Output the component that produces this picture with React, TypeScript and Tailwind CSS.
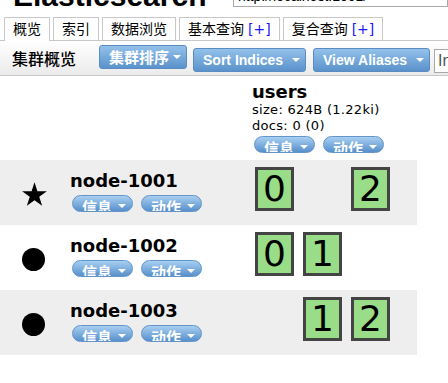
import React from 'react';

const nodes = [
  { name: 'node-1001', master: true, shards: [0, null, 2] },
  { name: 'node-1002', master: false, shards: [0, 1, null] },
  { name: 'node-1003', master: false, shards: [null, 1, 2] },
];

function Arrow({ className = '' }: { className?: string }) {
  return (
    <div
      className={`w-0 h-0 border-x-[4px] border-x-transparent border-t-[4px] border-t-white ${className}`}
    />
  );
}

function ToolButton({ label, className = '', cjk = false }: { label: string; className?: string; cjk?: boolean }) {
  return (
    <div
      className={`shrink-0 h-[24px] flex items-center justify-between pl-[9px] pr-[5px] rounded-[3px] border border-[#5a8bc2] bg-gradient-to-b from-[#93c1ea] to-[#5a92cb] text-white font-bold whitespace-nowrap ${className}`}
    >
      <span
        className={
          cjk
            ? "text-[15px] leading-[18px] font-['Noto_Sans_CJK_SC',sans-serif]"
            : "text-[14px] leading-[18px] font-['Liberation_Sans',sans-serif]"
        }
      >
        {label}
      </span>
      <Arrow />
    </div>
  );
}

function Pill({ label }: { label: string }) {
  return (
    <div className="h-[17px] w-[61px] rounded-full border border-[#6494c8] bg-gradient-to-b from-[#a8cff1] to-[#5790cb] overflow-hidden flex items-start pl-[9px] pr-[6px]">
      <span className="pt-[3px] text-[15px] leading-[15px] font-bold text-white font-['Noto_Sans_CJK_SC',sans-serif]">
        {label}
      </span>
      <Arrow className="ml-auto mt-[8px]" />
    </div>
  );
}

function Pills({ className = '' }: { className?: string }) {
  return (
    <div className={`flex gap-[8px] ${className}`}>
      <Pill label="信息" />
      <Pill label="动作" />
    </div>
  );
}

function Shard({ n }: { n: number }) {
  return (
    <div className="ml-[3px] w-[39px] h-[44px] border-[3px] border-[#444] bg-[#99dd88] flex items-center justify-center text-[36px] leading-none text-black">
      {n}
    </div>
  );
}

function Star() {
  return (
    <svg width="25" height="24" viewBox="0 0 25 24">
      <polygon
        fill="#000"
        points="12.5,0.2 15.42,9.18 24.86,9.18 17.23,14.74 20.14,23.72 12.5,18.17 4.86,23.72 7.77,14.74 0.14,9.18 9.58,9.18"
      />
    </svg>
  );
}

const tabs = [
  { label: '概览', active: true },
  { label: '索引' },
  { label: '数据浏览' },
  { label: '基本查询', plus: true },
  { label: '复合查询', plus: true },
];

export default function App() {
  return (
    <div className="w-[448px] h-[383px] overflow-hidden bg-white text-black font-['DejaVu_Sans','Noto_Sans_CJK_SC',sans-serif]">
      {/* page header, scrolled mostly out of view */}
      <div className="h-[17px] flex items-start overflow-hidden">
        <div className="ml-[13px] w-[220px] shrink-0 h-[8px] overflow-hidden">
          <div className="mt-[-19px] text-[30px] leading-[30px] font-bold whitespace-nowrap font-['Liberation_Sans',sans-serif]">
            Elasticsearch
          </div>
        </div>
        <div className="flex-1 h-[7px] border-x border-b border-[#a9a9a9] overflow-hidden">
          <div className="mt-[-11px] pl-[4px] text-[14px] leading-[15px] whitespace-nowrap font-['Liberation_Sans',sans-serif]">
            http://localhost:1001/
          </div>
        </div>
      </div>

      {/* tabs */}
      <div className="h-[23px] flex items-end gap-[3px] pl-[4px]">
        {tabs.map((t) => (
          <div
            key={t.label}
            className={`shrink-0 flex items-center px-[8px] border border-b-0 border-[#c8c8c8] text-[14px] leading-[20px] whitespace-nowrap ${
              t.active ? 'h-[24px] mb-[-1px] relative z-10 bg-white pb-[1px]' : 'h-[23px] bg-white'
            }`}
          >
            {t.label}
            {t.plus && <span className="ml-[4px] text-[#1a1aff]">[+]</span>}
          </div>
        ))}
      </div>

      {/* toolbar */}
      <div className="h-[36px] border-y border-[#c8c8c8] bg-gradient-to-b from-white to-[#ebebeb] flex items-start pl-[12px] overflow-hidden">
        <div className="shrink-0 self-center w-[87px] text-[16px] leading-[20px] font-medium whitespace-nowrap font-['Noto_Sans_CJK_SC',sans-serif]">
          集群概览
        </div>
        <ToolButton label="集群排序" cjk className="w-[88px] mt-[4px]" />
        <ToolButton label="Sort Indices" className="w-[113px] mt-[7px] ml-[6px]" />
        <ToolButton label="View Aliases" className="w-[117px] mt-[7px] ml-[7px]" />
        <div className="ml-[4px] mt-[8px] h-[24px] w-[200px] shrink-0 border border-[#a9a9a9] bg-white pl-[3px] text-[16px] leading-[22px] text-[#555] whitespace-nowrap font-['Liberation_Sans',sans-serif]">
          Index Filter
        </div>
      </div>

      {/* cluster overview table */}
      <div className="w-[417px]">
        <div className="h-[84px] flex">
          <div className="w-[252px] shrink-0" />
          <div className="pt-[6px]">
            <div className="text-[18px] leading-[20px] font-bold">users</div>
            <div className="text-[13px] leading-[16px] tracking-[0.3px]">size: 624B (1.22ki)</div>
            <div className="text-[13px] leading-[16px] tracking-[0.3px]">docs: 0 (0)</div>
            <Pills className="mt-[2px] ml-[2px]" />
          </div>
        </div>

        {nodes.map((node, i) => (
          <div key={node.name} className={`h-[65px] flex ${i % 2 === 0 ? 'bg-[#eeeeee]' : 'bg-white'}`}>
            <div className={`w-[70px] shrink-0 pl-[22px] ${node.master ? 'pt-[22px]' : 'pt-[23px]'}`}>
              {node.master ? <Star /> : <div className="w-[23px] h-[23px] rounded-full bg-black" />}
            </div>
            <div className="w-[182px] shrink-0 pt-[10px]">
              <div className="text-[18px] leading-[21px] font-bold">{node.name}</div>
              <Pills className="mt-[4px] ml-[2px]" />
            </div>
            <div className="flex pt-[7px]">
              {node.shards.map((s, j) => (
                <div key={j} className="w-[48px] shrink-0">
                  {s !== null && <Shard n={s} />}
                </div>
              ))}
            </div>
          </div>
        ))}
      </div>
    </div>
  );
}
